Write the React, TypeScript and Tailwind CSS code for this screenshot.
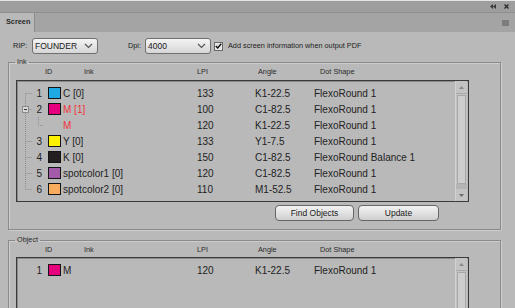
import React from 'react';

type Row = {
  id?: string;
  color?: string;
  ink: string;
  red?: boolean;
  child?: boolean;
  expander?: boolean;
  lpi: string;
  angle: string;
  dot: string;
};

const inkRows: Row[] = [
  { id: '1', color: '#1ea9e4', ink: 'C [0]', lpi: '133', angle: 'K1-22.5', dot: 'FlexoRound 1' },
  { id: '2', color: '#e6007e', ink: 'M [1]', red: true, expander: true, lpi: '100', angle: 'C1-82.5', dot: 'FlexoRound 1' },
  { child: true, ink: 'M', red: true, lpi: '120', angle: 'K1-22.5', dot: 'FlexoRound 1' },
  { id: '3', color: '#fff200', ink: 'Y [0]', lpi: '133', angle: 'Y1-7.5', dot: 'FlexoRound 1' },
  { id: '4', color: '#231f20', ink: 'K [0]', lpi: '150', angle: 'C1-82.5', dot: 'FlexoRound Balance 1' },
  { id: '5', color: '#a35aa8', ink: 'spotcolor1 [0]', lpi: '120', angle: 'C1-82.5', dot: 'FlexoRound 1' },
  { id: '6', color: '#f9ab5e', ink: 'spotcolor2 [0]', lpi: '110', angle: 'M1-52.5', dot: 'FlexoRound 1' },
];

const objectRows: Row[] = [
  { id: '1', color: '#e6007e', ink: 'M', lpi: '120', angle: 'K1-22.5', dot: 'FlexoRound 1' },
];

const Chevron = () => (
  <svg width="9" height="6" viewBox="0 0 9 6">
    <path d="M1 1 L4.5 4.5 L8 1" fill="none" stroke="#555" strokeWidth="1.2" />
  </svg>
);

const Select = ({ value, width }: { value: string; width: string }) => (
  <div
    className={`${width} h-[16px] flex items-center justify-between rounded-[3px] border border-[#707070] bg-gradient-to-b from-[#f4f4f4] to-[#d6d6d6] pl-[2px] pr-[4px] text-[8.5px] text-[#1a1a1a]`}
  >
    <span>{value}</span>
    <Chevron />
  </div>
);

const TreeCell = ({ index, count, row, tree }: { index: number; count: number; row: Row; tree: boolean }) => {
  if (!tree) return <div className="w-[15px]" />;
  const top = index === 0 ? 8.5 : 0;
  const bottom = index === count - 1 ? 8.5 : 16;
  return (
    <svg width="15" height="16" className="shrink-0">
      <line x1="8.5" y1={top} x2="8.5" y2={bottom} stroke="#8c8c8c" strokeDasharray="1 1" />
      {!row.child && <line x1="8.5" y1="8.5" x2="15" y2="8.5" stroke="#8c8c8c" strokeDasharray="1 1" />}
      {row.expander && (
        <g>
          <rect x="5.5" y="5.5" width="6" height="6" fill="#d8d8d8" stroke="#8a8a8a" />
          <line x1="7" y1="8.5" x2="10" y2="8.5" stroke="#333" />
        </g>
      )}
    </svg>
  );
};

const ListRow = ({ row, index, count, tree }: { row: Row; index: number; count: number; tree: boolean }) => (
  <div className="flex h-[16px] items-center text-[10px] text-[#1e1e1e]">
    <TreeCell index={index} count={count} row={row} tree={tree} />
    <div className="w-[11px] shrink-0 pr-[1px] text-right">
      {row.child ? (
        <svg width="11" height="16" className="block">
          <path d="M6.5 0 V8.5 H11" fill="none" stroke="#8c8c8c" strokeDasharray="1 1" />
        </svg>
      ) : (
        row.id
      )}
    </div>
    <div className="w-[5px] shrink-0" />
    <div className="w-[13px] h-[12px] shrink-0">
      {row.color && (
        <div className="h-full w-full border-[1.5px] border-[#141414]" style={{ backgroundColor: row.color }} />
      )}
    </div>
    <div className={`w-[136px] shrink-0 pl-[2px] ${row.red ? 'text-[#f0323c]' : ''}`}>{row.ink}</div>
    <div className="w-[58px] shrink-0">{row.lpi}</div>
    <div className="w-[59px] shrink-0">{row.angle}</div>
    <div className="flex-1 whitespace-nowrap">{row.dot}</div>
  </div>
);

const ScrollBar = ({ full }: { full: boolean }) => (
  <div className="mr-[1px] flex w-[12px] shrink-0 flex-col border-l border-[#d2d2d2] bg-[#c3c3c3]">
    <div className="flex h-[13px] shrink-0 items-center justify-center border-b border-[#a9a9a9]">
      <svg width="5" height="3" viewBox="0 0 5 3">
        <path d="M0 3 L2.5 0 L5 3 Z" fill="#8a8a8a" />
      </svg>
    </div>
    <div className="flex flex-1 flex-col">
      <div className={`mx-[1px] mt-[1px] ${full ? 'h-[89px]' : 'h-[60px]'} border border-[#a8a8a8] bg-[#cdcdcd]`} />
      <div className="flex-1 bg-[#b4b4b4]" />
    </div>
    {full && (
      <div className="flex h-[12px] shrink-0 items-center justify-center">
        <svg width="5" height="3" viewBox="0 0 5 3">
          <path d="M0 0 L2.5 3 L5 0 Z" fill="#6a6a6a" />
        </svg>
      </div>
    )}
  </div>
);

const Headers = () => (
  <div className="flex h-[11px] items-center pl-[36px] text-[7.3px] text-[#2a2a2a]">
    <div className="w-[39px]">ID</div>
    <div className="w-[113px]">Ink</div>
    <div className="w-[61px]">LPI</div>
    <div className="w-[62px]">Angle</div>
    <div>Dot Shape</div>
  </div>
);

const Group = ({ title, children, className }: { title: string; children: React.ReactNode; className?: string }) => (
  <fieldset
    className={`w-[493px] border border-[#8a8a8a] shadow-[inset_1px_1px_0_#cdcdcd,1px_1px_0_#cdcdcd] ${className ?? ''}`}
  >
    <legend className="ml-[6px] px-[2px] text-[7.3px] leading-[10px] text-[#2a2a2a]">{title}</legend>
    {children}
  </fieldset>
);

const Button = ({ label, width }: { label: string; width: string }) => (
  <button
    className={`${width} h-[16px] rounded-[4px] border border-[#666] bg-gradient-to-b from-[#f3f3f3] to-[#cfcfcf] text-[8.5px] text-[#1a1a1a]`}
  >
    {label}
  </button>
);

export default function App() {
  return (
    <div
      className="flex h-[308px] w-[515px] flex-col overflow-hidden bg-[#b9b9b9]"
      style={{ fontFamily: '"Liberation Sans", Arial, sans-serif' }}
    >
      {/* panel title bar */}
      <div className="h-px shrink-0 bg-[#e4e4e4]" />
      <div className="flex h-[11px] shrink-0 items-center justify-end gap-[8px] bg-[#9e9e9e] pr-[6px]">
        <svg width="6" height="5" viewBox="0 0 6 5">
          <path d="M0 2.5 L3 0 V5 Z M3 2.5 L6 0 V5 Z" fill="#3a3a3a" />
        </svg>
        <svg width="5" height="5" viewBox="0 0 5 5">
          <path d="M0.5 0.5 L4.5 4.5 M4.5 0.5 L0.5 4.5" stroke="#2a2a2a" strokeWidth="1.3" />
        </svg>
      </div>
      <div className="h-px shrink-0 bg-[#8f8f8f]" />

      {/* tab row */}
      <div className="flex h-[19px] shrink-0 items-stretch bg-[#a4a4a4]">
        <div className="flex w-[35px] items-center border-r border-[#8c8c8c] bg-[#b9b9b9] pl-[6px] text-[7.3px] font-bold text-[#2b2b2b]">
          Screen
        </div>
        <div className="flex flex-1 items-center justify-end pr-[6px]">
          <div className="h-[6px] w-[7px] bg-[#7c7c7c]" />
        </div>
      </div>

      {/* options row */}
      <div className="mt-[6px] flex h-[16px] shrink-0 items-center text-[7.3px] text-[#222]">
        <span className="ml-[13px] w-[19px]">RIP:</span>
        <Select value="FOUNDER" width="w-[66px]" />
        <span className="ml-[30px] w-[17px]">Dpi:</span>
        <Select value="4000" width="w-[66px]" />
        <div className="ml-[3px] flex h-[9px] w-[9px] items-center justify-center border border-[#6a6a6a] bg-[#e8e8e8]">
          <svg width="7" height="6" viewBox="0 0 7 6">
            <path d="M0.8 3 L2.7 5 L6.2 0.8" fill="none" stroke="#111" strokeWidth="1.4" />
          </svg>
        </div>
        <span className="ml-[5px]">Add screen information when output PDF</span>
      </div>

      {/* Ink group */}
      <div className="mt-[3px] shrink-0 pl-[8px]">
        <Group title="Ink" className="pb-[8px]">
          <Headers />
          <div className="ml-[7px] mt-[2px] flex h-[122px] w-[453px] border border-[#3a3a3a] shadow-[inset_1px_1px_0_#8a8a8a]">
            <div className="flex-1 pt-[4px]">
              {inkRows.map((r, i) => (
                <ListRow key={i} row={r} index={i} count={inkRows.length} tree />
              ))}
            </div>
            <ScrollBar full />
          </div>
          <div className="mt-[3px] flex gap-[4px] pl-[266px]">
            <Button label="Find Objects" width="w-[79px]" />
            <Button label="Update" width="w-[81px]" />
          </div>
        </Group>
      </div>

      {/* Object group */}
      <div className="mt-[5px] shrink-0 pl-[8px]">
        <Group title="Object" className="pb-[8px]">
          <Headers />
          <div className="ml-[7px] mt-[1px] flex h-[80px] w-[453px] border border-[#3a3a3a] shadow-[inset_1px_1px_0_#8a8a8a]">
            <div className="flex-1 pt-[4px]">
              {objectRows.map((r, i) => (
                <ListRow key={i} row={r} index={i} count={objectRows.length} tree={false} />
              ))}
            </div>
            <ScrollBar full={false} />
          </div>
        </Group>
      </div>
    </div>
  );
}
